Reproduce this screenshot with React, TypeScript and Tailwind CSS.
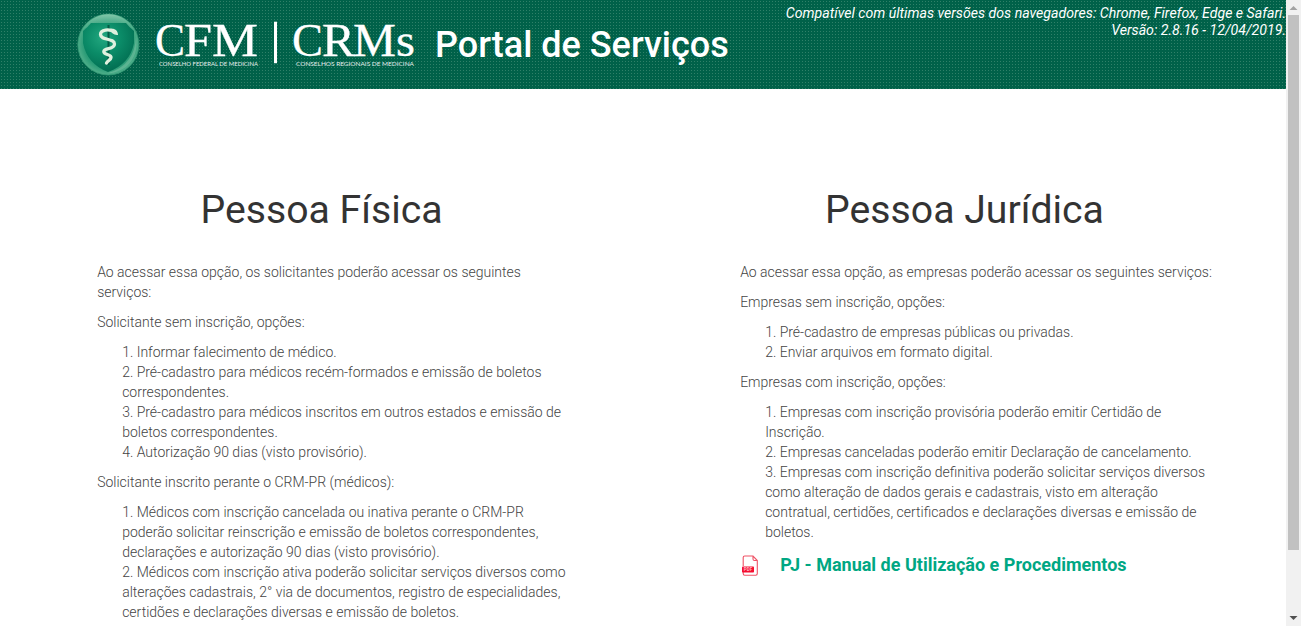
import type { ReactNode } from "react";

function Emblem() {
  return (
    <svg className="mt-[13px] h-16 w-[63px] shrink-0" viewBox="0 0 63 64">
      <defs>
        <radialGradient id="rim" cx="0.5" cy="0.5" r="0.5">
          <stop offset="0" stopColor="#0e8a66" />
          <stop offset="0.8" stopColor="#2b9c77" />
          <stop offset="1" stopColor="#4fae8a" />
        </radialGradient>
        <radialGradient id="shield" cx="0.4" cy="0.3" r="0.75">
          <stop offset="0" stopColor="#23a880" />
          <stop offset="0.45" stopColor="#0b8c68" />
          <stop offset="1" stopColor="#00694e" />
        </radialGradient>
        <linearGradient id="shine" x1="0" y1="0" x2="0" y2="1">
          <stop offset="0" stopColor="#8ccbb0" stopOpacity="0.85" />
          <stop offset="1" stopColor="#55b28f" stopOpacity="0.2" />
        </linearGradient>
      </defs>
      <circle cx="31.3" cy="31.5" r="30.5" fill="url(#rim)" stroke="#319873" strokeWidth="0.8" />
      <path d="M5 17C17 -4 46 -4 58 17C48 9 16 9 5 17Z" fill="url(#shine)" />
      <path d="M52 46Q58 38 59 24Q62 42 49 54Q38 61 31 60Q45 56 52 46Z" fill="#7dc4a6" fillOpacity="0.5" />
      <path d="M6 18Q11 14 14 10H49Q52 14 57 18V30Q53 51 31 59Q10 51 6 30Z" fill="url(#shield)" />
      <path d="M31.5 12V52" stroke="#035b44" strokeWidth="2" />
      <path d="M38 19C32 15.500 23.500 16.500 23.500 21.500C23.500 27.500 37.500 25 37.500 31C37.500 37 26.800 34.500 26.800 38.700C26.800 42 34.500 41 34 44.500C33.800 47 31 47.500 29.500 50" fill="none" stroke="#dff0de" strokeWidth="3.300" strokeLinecap="round" />
      <path d="M33 16C38 15 41 18 41 22Q38 22.500 35 20Z" fill="#dff0de" />
    </svg>
  );
}

function Wordmark() {
  return (
    <svg className="ml-4 mt-3 h-16 w-[262px] shrink-0" viewBox="0 0 262 64" fill="#fff" fontFamily="'Liberation Serif', serif">
      <g stroke="#fff" strokeWidth="0.3">
        <text y="44" fontSize="47" letterSpacing="0">
          <tspan x="-1" textLength="30" lengthAdjust="spacingAndGlyphs">C</tspan>
          <tspan x="28" textLength="28" lengthAdjust="spacingAndGlyphs">F</tspan>
          <tspan x="56" textLength="46" lengthAdjust="spacingAndGlyphs">M</tspan>
        </text>
        <text y="44" fontSize="47">
          <tspan x="136" textLength="31" lengthAdjust="spacingAndGlyphs">C</tspan>
          <tspan x="166" textLength="33" lengthAdjust="spacingAndGlyphs">R</tspan>
          <tspan x="197" textLength="43" lengthAdjust="spacingAndGlyphs">M</tspan>
          <tspan x="240" textLength="19" lengthAdjust="spacingAndGlyphs">s</tspan>
        </text>
      </g>
      <rect x="118" y="9.7" width="3" height="41.5" />
      <g fontSize="6" fontFamily="Lato, sans-serif" opacity="0.9">
        <text x="3" y="53.8" textLength="99" lengthAdjust="spacingAndGlyphs">CONSELHO FEDERAL DE MEDICINA</text>
        <text x="140" y="53.8" textLength="118" lengthAdjust="spacingAndGlyphs">CONSELHOS REGIONAIS DE MEDICINA</text>
      </g>
    </svg>
  );
}

function PdfIcon() {
  return (
    <svg className="h-[22px] w-[17px] shrink-0" viewBox="0 0 17 22" fill="none">
      <path d="M1.2 11V2.5Q1.2 1 2.7 1H11L15.3 5.5V18.500Q15.3 20.2 13.800 20.2H2.700Q1.2 20.2 1.2 18.500V17M11 1V4Q11 5.500 12.500 5.500H15.300" stroke="#ef5265" strokeWidth="1.1" />
      <rect x="0" y="11.6" width="12" height="6" rx="0.8" fill="#f50d30" />
      <text x="1.800" y="16.300" fontSize="4.500" fontWeight="700" fontFamily="Roboto, sans-serif" fill="#ffb3bf" textLength="8.500">PDF</text>
    </svg>
  );
}

function Items({ items }: { items: string[] }) {
  return (
    <ol className="mb-2.5 pl-[25px]">
      {items.map((item, i) => <li key={item}>{`${i + 1}. ${item}`}</li>)}
    </ol>
  );
}

function Column({ title, children }: { title: string; children: ReactNode }) {
  return (
    <section className="w-[643px] shrink-0 pt-[99px]">
      <h1 className="mb-[30px] text-center text-[39.2px] font-normal leading-[44px] text-[#333]">{title}</h1>
      <div className="pl-[97.15px] pr-[70px]">{children}</div>
    </section>
  );
}

function ScrollBar() {
  return (
    <div className="flex w-[15px] shrink-0 flex-col items-center bg-[#f1f1f1]">
      <svg className="h-[15px] w-[15px] shrink-0" viewBox="0 0 15 15"><path d="M3.5 10L7.5 6L11.5 10Z" fill="#a3a3a3" /></svg>
      <div className="h-[535px] w-[11px] shrink-0 bg-[#c1c1c1]" />
      <svg className="mt-auto h-[15px] w-[15px] shrink-0" viewBox="0 0 15 15"><path d="M3.5 5L7.5 9L11.5 5Z" fill="#505050" /></svg>
    </div>
  );
}

export default function App() {
  return (
    <div className="flex h-[626px] w-[1301px] overflow-hidden bg-white font-['Roboto',sans-serif]">
      <div className="w-[1286px] shrink-0 overflow-hidden">
        <header className="flex h-[89px] bg-[#006149] bg-[linear-gradient(90deg,transparent_1px,#006149_1px,#006149_3px),linear-gradient(#2f8068_1px,#006149_1px)] bg-[size:3px_3px] bg-[position:1px_1px] pl-[77px] text-white">
          <Emblem />
          <Wordmark />
          <div className="ml-[17px] mt-[23px] shrink-0 whitespace-nowrap text-[36px] font-medium leading-[44px]">Portal de Serviços</div>
          <div className="ml-auto mt-[5px] whitespace-nowrap text-right text-[14.14px] italic leading-[17px]">
            Compatível com últimas versões dos navegadores: Chrome, Firefox, Edge e Safari.<br />Versão: 2.8.16 - 12/04/2019.
          </div>
        </header>
        <main className="flex text-[14px] font-light leading-5 text-[#444]">
          <Column title="Pessoa Física">
            <p className="mb-2.5">Ao acessar essa opção, os solicitantes poderão acessar os seguintes serviços:</p>
            <p className="mb-2.5">Solicitante sem inscrição, opções:</p>
            <Items items={["Informar falecimento de médico.", "Pré-cadastro para médicos recém-formados e emissão de boletos correspondentes.", "Pré-cadastro para médicos inscritos em outros estados e emissão de boletos correspondentes.", "Autorização 90 dias (visto provisório)."]} />
            <p className="mb-2.5">Solicitante inscrito perante o CRM-PR (médicos):</p>
            <Items items={["Médicos com inscrição cancelada ou inativa perante o CRM-PR poderão solicitar reinscrição e emissão de boletos correspondentes, declarações e autorização 90 dias (visto provisório).", "Médicos com inscrição ativa poderão solicitar serviços diversos como alterações cadastrais, 2° via de documentos, registro de especialidades, certidões e declarações diversas e emissão de boletos."]} />
          </Column>
          <Column title="Pessoa Jurídica">
            <p className="mb-2.5">Ao acessar essa opção, as empresas poderão acessar os seguintes serviços:</p>
            <p className="mb-2.5">Empresas sem inscrição, opções:</p>
            <Items items={["Pré-cadastro de empresas públicas ou privadas.", "Enviar arquivos em formato digital."]} />
            <p className="mb-2.5">Empresas com inscrição, opções:</p>
            <Items items={["Empresas com inscrição provisória poderão emitir Certidão de Inscrição.", "Empresas canceladas poderão emitir Declaração de cancelamento.", "Empresas com inscrição definitiva poderão solicitar serviços diversos como alteração de dados gerais e cadastrais, visto em alteração contratual, certidões, certificados e declarações diversas e emissão de boletos."]} />
            <a className="flex items-start pl-0.5 text-[18px] font-bold leading-[25px] text-[#00a783]">
              <span className="mt-[3px]"><PdfIcon /></span>
              <span className="ml-[21px]">PJ - Manual de Utilização e Procedimentos</span>
            </a>
          </Column>
        </main>
      </div>
      <ScrollBar />
    </div>
  );
}
